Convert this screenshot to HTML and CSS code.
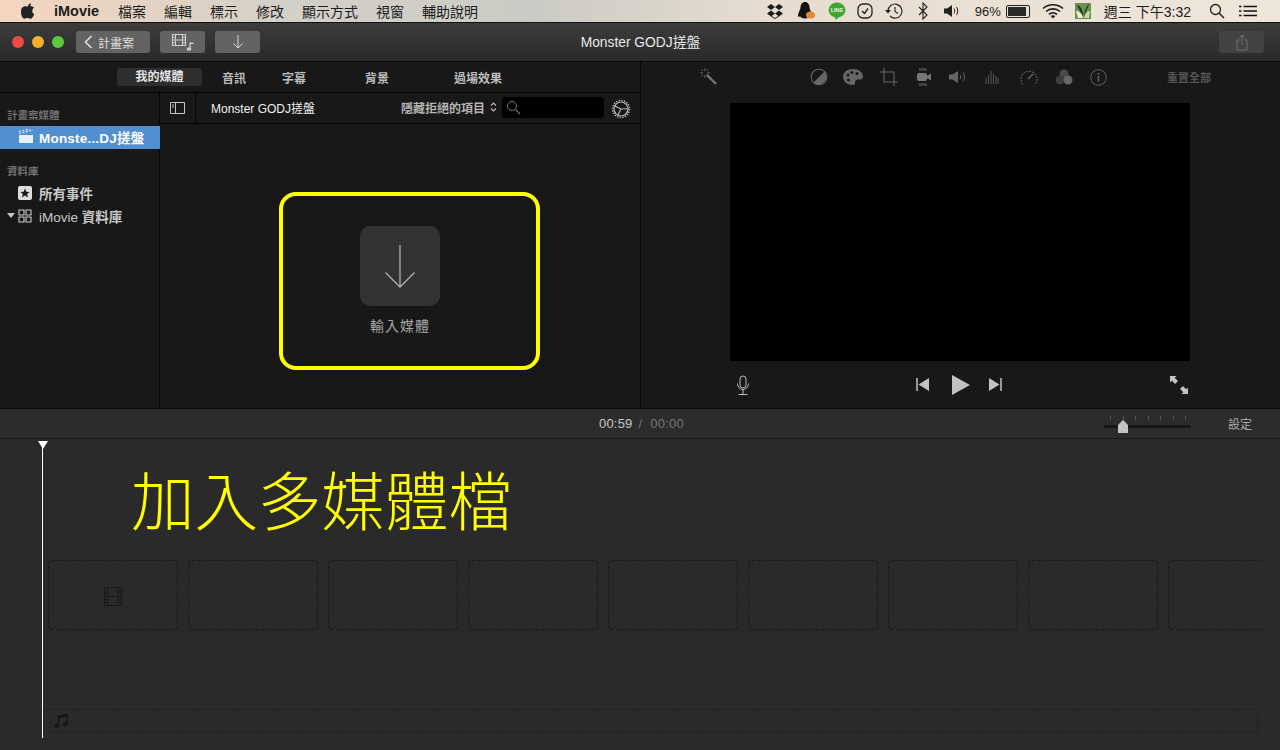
FILE: index.html
```html
<!DOCTYPE html>
<html lang="zh-Hant">
<head>
    <meta charset="UTF-8">
    <meta name="viewport" content="width=device-width, initial-scale=1.0">
    <title>iMovie</title>
    <link rel="stylesheet" href="styles.css">
</head>
<body>
    <!-- system menu bar -->
    <div class="menubar">
        <svg class="apple" width="14" height="16" viewBox="0 0 14 16"><path d="M10 0.5c.1 1.1-.3 2-.9 2.700-.6.7-1.500 1.200-2.400 1.100-.1-1 .4-2 .9-2.600C8.200 1 9.200.5 10 .5zM13.300 11.300c-.4.9-.6 1.300-1.100 2.100-.7 1.100-1.700 2.400-2.900 2.400-1.100 0-1.400-.7-2.800-.7s-1.800.7-2.900.7c-1.200 0-2.100-1.200-2.800-2.300C-.2 10.500-.4 7 .8 5.200c.8-1.300 2.100-2 3.300-2s2 .7 3 .7 1.600-.7 3-.7c1.100 0 2.200.6 3 1.600-2.600 1.500-2.200 5.200.2 6.500z"/></svg>
        <span class="menu-app">iMovie</span>
        <span class="menu-item">檔案</span>
        <span class="menu-item">編輯</span>
        <span class="menu-item">標示</span>
        <span class="menu-item">修改</span>
        <span class="menu-item">顯示方式</span>
        <span class="menu-item">視窗</span>
        <span class="menu-item">輔助說明</span>

        <div class="status">
            <svg class="st st-drop" width="18" height="18" viewBox="0 0 18 16"><path d="M5 1 9 4 5 7 1 4zM13 1l4 3-4 3-4-3zM5 7.500l4 3-4 3-4-3zM13 7.500l4 3-4 3-4-3z" fill="#1c1c1c"/><path d="M5 12.500 9 15l4-2.500v1L9 16l-4-2.500z" fill="#1c1c1c"/></svg>
            <svg class="st st-qq" width="20" height="18" viewBox="0 0 20 18"><path d="M9 0c3 0 4.500 2.500 4.500 5.500 0 2 2.500 5 2.500 8 0 2-1 1.500-2 .5-.5 1.500-2 2.500-5 2.500S4.500 15.500 4 14c-1 1-2 1.500-2 -.5 0-3 2.500-6 2.500-8C4.500 2.500 6 0 9 0z" fill="#111"/><ellipse cx="14.500" cy="13" rx="4.500" ry="3.500" fill="#e08a35"/></svg>
            <svg class="st st-line" width="18" height="18" viewBox="0 0 18 18"><ellipse cx="9" cy="8" rx="8.500" ry="7.500" fill="#3fa82c"/><path d="M7 15h4l-3 3z" fill="#3fa82c"/><text class="line-txt" x="9" y="10.300" text-anchor="middle">LINE</text></svg>
            <svg class="st st-check" width="18" height="18" viewBox="0 0 18 18"><rect x="2" y="2" width="14" height="14" rx="5" fill="none" stroke="#222" stroke-width="1.300"/><path d="M6 9l2.500 2.500L12 6.500" fill="none" stroke="#222" stroke-width="1.400"/></svg>
            <svg class="st st-time" width="20" height="18" viewBox="0 0 20 18"><path d="M4 9a7 7 0 1 1 2 5" fill="none" stroke="#222" stroke-width="1.100"/><path d="M1 8h6l-3 3.500z" fill="#222"/><path d="M11 5v4.500l3 2" fill="none" stroke="#222" stroke-width="1.100"/></svg>
            <svg class="st st-blue" width="10" height="18" viewBox="0 0 10 18"><path d="M1 5l8 8-4 4V1l4 4-8 8" fill="none" stroke="#222" stroke-width="1.100"/></svg>
            <svg class="st st-vol" width="18" height="18" viewBox="0 0 18 16"><path d="M1 5.500h3L9 2v12l-5-3.500H1z" fill="#222"/><path d="M11 5.500c1 1.500 1 3.500 0 5M13.500 4c1.700 2.500 1.700 5.500 0 8" fill="none" stroke="#222"/></svg>
            <span class="st-pct">96%</span>
            <span class="battery"><span class="battery-fill"></span></span>
            <svg class="st st-wifi" width="22" height="18" viewBox="0 0 22 16"><path d="M1 5.500c5.500-5 14.500-5 20 0M4 8.500c4-3.500 10-3.500 14 0M7 11.300c2.300-2 5.700-2 8 0" fill="none" stroke="#1c1c1c" stroke-width="1.600"/><path d="M11 15.500 8.700 13c1.300-1 3.300-1 4.600 0z" fill="#1c1c1c"/></svg>
            <svg class="st st-img" width="16" height="16" viewBox="0 0 16 16"><rect width="16" height="16" fill="#6d8f55"/><path d="M2 2c4 1 6 5 6 12C6 10 4 6 2 2zM14 1c-1 4-3 6-5 13 0-6 2-10 5-13z" fill="#1d3a17"/><path d="M1 8c3 0 6 2 7 7H3z" fill="#e8efd9"/><path d="M15 8c-3 0-5 3-6 7h5z" fill="#c5d8a8"/></svg>
            <span class="st-clock">週三 下午3:32</span>
            <svg class="st st-find" width="16" height="16" viewBox="0 0 16 16"><circle cx="6.500" cy="6.500" r="5" fill="none" stroke="#222" stroke-width="1.300"/><path d="M10 10l5 5" stroke="#222" stroke-width="1.500"/></svg>
            <svg class="st" width="18" height="12" viewBox="0 0 18 12"><path d="M0 1.500h2.500M4.500 1.500H18M0 6h2.500M4.500 6H18M0 10.500h2.500M4.500 10.500H18" stroke="#111" stroke-width="1.700"/></svg>
        </div>
    </div>

    <!-- window title bar -->
    <div class="titlebar">
        <span class="light red"></span>
        <span class="light yellow"></span>
        <span class="light green"></span>
        <button class="tb-btn tb-back">
            <svg width="9" height="14" viewBox="0 0 9 14"><path d="M7.500 1 1.500 7l6 6" fill="none" stroke="#e0e0e0" stroke-width="1.600"/></svg>
            <span>計畫案</span>
        </button>
        <button class="tb-btn tb-media">
            <svg width="24" height="18" viewBox="0 0 24 18"><path d="M1.500 1.500h13v11h-13zM4.500 1.500v11M11.500 1.500v11M4.500 7h7M1.500 4.200h3M1.500 7h3M1.500 9.800h3M11.500 4.200h3M11.500 7h3M11.500 9.800h3" fill="none" stroke="#d0d0d0"/><path d="M18.500 17V9.500h4v1.500h-2.800v5" fill="#d0d0d0"/><ellipse cx="18" cy="16" rx="2.300" ry="1.700" fill="#d0d0d0"/></svg>
        </button>
        <button class="tb-btn tb-import">
            <svg width="12" height="16" viewBox="0 0 12 16"><path d="M6 1v13M1.500 9.500 6 14l4.500-4.500" fill="none" stroke="#d8d8d8"/></svg>
        </button>
        <div class="win-title">Monster GODJ搓盤</div>
        <button class="tb-btn tb-share">
            <svg width="12" height="17" viewBox="0 0 12 17"><path d="M3.500 6H1v10h10V6H8.500M6 11V1M3.500 3.300 6 1l2.500 2.300" fill="none" stroke="#707070"/></svg>
        </button>
    </div>

    <div class="workspace">
        <!-- browser side -->
        <div class="browser">
            <div class="tabs">
                <span class="tab tab-on">我的媒體</span>
                <span class="tab tab-audio">音訊</span>
                <span class="tab tab-titles">字幕</span>
                <span class="tab tab-bg">背景</span>
                <span class="tab tab-trans">過場效果</span>
            </div>
            <div class="browser-body">
                <aside class="sidebar">
                    <div class="side-head">計畫案媒體</div>
                    <div class="side-row side-sel">
                        <svg class="side-icon" width="16" height="15" viewBox="0 0 16 15"><path d="M1 6h14v8H1z" fill="#e8f0fa"/><path d="M1 4.500 15 1M1 2.500 12 0" stroke="#e8f0fa" stroke-width="1.200" stroke-dasharray="2 1.500"/></svg>
                        <span>Monste...DJ搓盤</span>
                    </div>
                    <div class="side-head side-head2">資料庫</div>
                    <div class="side-row">
                        <svg class="side-icon" width="14" height="14" viewBox="0 0 14 14"><rect width="14" height="14" rx="2" fill="#ddd"/><path d="M7 2.500 8.300 5.700l3.400.2-2.600 2.200.9 3.400L7 9.600l-3 1.900.9-3.400-2.600-2.200 3.400-.2z" fill="#1a1a1a"/></svg>
                        <span>所有事件</span>
                    </div>
                    <div class="side-row side-lib">
                        <span class="disclose"></span>
                        <svg class="side-icon" width="14" height="14" viewBox="0 0 14 14"><path d="M1 1h5v5H1zM8 1h5v5H8zM1 8h5v5H1zM8 8h5v5H8z" fill="none" stroke="#ccc" stroke-width="1.100"/></svg>
                        <span>iMovie <b>資料庫</b></span>
                    </div>
                </aside>
                <div class="media">
                    <div class="media-bar">
                        <div class="media-toggle">
                            <svg width="15" height="12" viewBox="0 0 15 12"><path d="M.5.500h14v11H.5zM5.500.500v11M2 3h2M2 5h2" fill="none" stroke="#c4c4c4"/></svg>
                        </div>
                        <span class="media-name">Monster GODJ搓盤</span>
                        <span class="media-filter">隱藏拒絕的項目</span>
                        <svg class="media-arrows" width="7" height="12" viewBox="0 0 7 12"><path d="M1 4.500 3.500 2 6 4.500M1 7.500 3.500 10 6 7.500" fill="none" stroke="#bbb" stroke-width="1.100"/></svg>
                        <div class="search">
                            <svg width="15" height="15" viewBox="0 0 15 15"><circle cx="6" cy="6" r="4.500" fill="none" stroke="#777"/><path d="M9.500 9.500l4.500 4.500" stroke="#777" stroke-width="1.100"/></svg>
                        </div>
                        <svg class="gear" width="20" height="20" viewBox="0 0 20 20"><circle cx="10" cy="10" r="7" fill="none" stroke="#bdbdbd" stroke-width="1.200"/><circle cx="10" cy="10" r="8.500" fill="none" stroke="#bdbdbd" stroke-width="1.500" stroke-dasharray="1.300 1.370"/><path d="M10 10 3.800 7M10 10l6.800-.2M10 10l-3 6" stroke="#bdbdbd" stroke-width="1.100"/></svg>
                    </div>
                    <div class="media-main">
                        <div class="mark-box">
                            <div class="import">
                                <div class="import-tile">
                                    <svg width="32" height="44" viewBox="0 0 32 44"><path d="M16 1v42M1.500 28.500 16 43l14.500-14.500" fill="none" stroke="#b0b0b0" stroke-width="1.300"/></svg>
                                </div>
                                <div class="import-label">輸入媒體</div>
                            </div>
                        </div>
                    </div>
                </div>
            </div>
        </div>

        <!-- viewer side -->
        <div class="viewer">
            <div class="adjust">
                <svg class="wand" width="20" height="20" viewBox="0 0 20 20"><path d="M8 8l9 9" stroke="#777" stroke-width="2.400"/><path d="M6 1v3M6 8v3M1 6h3M8 6h3M2.500 2.500l1.500 1.500M9.500 2.500 8 4M2.500 9.500 4 8" stroke="#666"/></svg>
                <svg class="adj a1" width="18" height="18" viewBox="0 0 18 18"><circle cx="9" cy="9" r="7.800" fill="none" stroke="#666" stroke-width="1.100"/><path d="M14.500 3.500A7.800 7.800 0 0 1 3.500 14.500z" fill="#666"/></svg>
                <svg class="adj a2" width="21" height="18" viewBox="0 0 21 18"><path d="M10 1C4 1 0 4.500 0 9c0 5 5 8 10 8 2.500 0 2-2 2-3 0-2 2-2.500 4-2.500s4-.5 4-3C20 4 15.500 1 10 1z" fill="#666"/><circle cx="5" cy="7" r="1.500" fill="#1a1a1a"/><circle cx="9" cy="4.500" r="1.500" fill="#1a1a1a"/><circle cx="14" cy="5.500" r="1.500" fill="#1a1a1a"/><circle cx="5.500" cy="12" r="1.500" fill="#1a1a1a"/></svg>
                <svg class="adj a3" width="18" height="18" viewBox="0 0 18 18"><path d="M4 0v14h14M0 4h14v14" fill="none" stroke="#666" stroke-width="1.100"/></svg>
                <svg class="adj a4" width="16" height="18" viewBox="0 0 16 18"><path d="M3 0h8M3 18h8M3 2h8M3 16h8" stroke="#666"/><rect x="1" y="5" width="10" height="8" rx="2" fill="#777"/><path d="M11 8l4-2.500v7L11 10z" fill="#777"/></svg>
                <svg class="adj a5" width="18" height="14" viewBox="0 0 18 14"><path d="M0 4.500h3.500L9 1v12L3.500 9.500H0z" fill="#666"/><path d="M11 4.500c1 1.500 1 3.500 0 5M14 2.500c2 3 2 6 0 9" fill="none" stroke="#666"/></svg>
                <svg class="adj a6" width="14" height="14" viewBox="0 0 14 14"><path d="M1 8v6M3.500 5v9M6 1v13M8.500 4v10M11 6v8M13 8v6" stroke="#555"/></svg>
                <svg class="adj a7" width="18" height="18" viewBox="0 0 18 18"><path d="M3 16.500a8 8 0 1 1 12 0" fill="none" stroke="#666" stroke-dasharray="2 1"/><path d="M8 11l5-5" stroke="#666" stroke-width="1.400"/></svg>
                <svg class="adj a8" width="18" height="16" viewBox="0 0 18 16"><circle cx="9" cy="5" r="4.500" fill="#4a4a4a"/><circle cx="5" cy="11" r="4.500" fill="#3d3d3d"/><circle cx="13" cy="11" r="4.500" fill="#666"/></svg>
                <svg class="adj a9" width="17" height="17" viewBox="0 0 17 17"><circle cx="8.500" cy="8.500" r="7.800" fill="none" stroke="#666"/><rect x="7.700" y="7" width="1.600" height="5.500" fill="#666"/><rect x="7.700" y="4" width="1.600" height="1.700" fill="#666"/></svg>
                <span class="reset">重置全部</span>
            </div>
            <div class="stage"></div>
            <div class="transport">
                <svg class="mic" width="14" height="20" viewBox="0 0 14 20"><rect x="4" y="1" width="6" height="12" rx="3" fill="none" stroke="#bbb"/><path d="M1.500 8.500c0 3.500 2.500 6 5.500 6s5.500-2.500 5.500-6M7 14.500v4.500M2.500 19.500h9" fill="none" stroke="#bbb"/></svg>
                <svg class="prev" width="14" height="13" viewBox="0 0 14 13"><path d="M1 0v13" stroke="#c2c2c2" stroke-width="1.500"/><path d="M2.500 6.500 13 0v13z" fill="#c2c2c2"/></svg>
                <svg class="play" width="19" height="20" viewBox="0 0 19 20"><path d="M1 0l18 10L1 20z" fill="#c2c2c2"/></svg>
                <svg class="next" width="14" height="13" viewBox="0 0 14 13"><path d="M13 0v13" stroke="#c2c2c2" stroke-width="1.500"/><path d="M11.500 6.500 1 0v13z" fill="#c2c2c2"/></svg>
                <svg class="full" width="18" height="18" viewBox="0 0 18 18"><path d="M0 0h6.500L4.700 1.800 8 5.100 5.100 8 1.800 4.700 0 6.500zM18 18h-6.500l1.800-1.800L10 12.900 12.900 10l3.300 3.300L18 11.500z" fill="#c2c2c2"/></svg>
            </div>
        </div>
    </div>

    <!-- timeline -->
    <div class="tl-head">
        <div class="tl-time"><span class="now">00:59</span><span class="sep">/</span><span class="total">00:00</span></div>
        <div class="zoom">
            <div class="ticks"><i></i><i></i><i></i><i></i><i></i><i></i><i></i></div>
            <div class="zoom-track"></div>
            <svg class="zoom-knob" width="10" height="13" viewBox="0 0 10 13"><path d="M5 0l5 5v8H0V5z" fill="#c4c4c4"/></svg>
        </div>
        <span class="tl-settings">設定</span>
    </div>
    <div class="timeline">
        <div class="playhead"></div>
        <div class="tl-note">加入多媒體檔</div>
        <div class="clips">
            <div class="clip">
                <svg width="18" height="19" viewBox="0 0 18 19"><path d="M.5.500h17v18H.5zM4 .500v18M14 .500v18M4 9.500h10M.5 3.500H4M.5 6.500H4M.5 9.500H4M.5 12.500H4M.5 15.500H4M14 3.500h3.500M14 6.500h3.500M14 9.500h3.500M14 12.500h3.500M14 15.500h3.500" fill="none" stroke="#191919"/></svg>
            </div>
            <div class="clip"></div>
            <div class="clip"></div>
            <div class="clip"></div>
            <div class="clip"></div>
            <div class="clip"></div>
            <div class="clip"></div>
            <div class="clip"></div>
            <div class="clip"></div>
        </div>
        <div class="audio-lane">
            <svg width="14" height="14" viewBox="0 0 14 14"><path d="M4.500 11.500V2.500l8.500-2v9.500" fill="none" stroke="#161616" stroke-width="1.300"/><path d="M4.500 2.500l8.500-2v2l-8.500 2z" fill="#161616"/><ellipse cx="2.800" cy="11.800" rx="2.500" ry="1.900" fill="#161616"/><ellipse cx="11.200" cy="10.300" rx="2.500" ry="1.900" fill="#161616"/></svg>
        </div>
    </div>
</body>
</html>
```

FILE: styles.css
```css
html, body {
    margin: 0;
    height: 750px;
    overflow: hidden;
}

body {
    font-family: "Liberation Sans", "Noto Sans CJK TC", sans-serif;
    background-color: #2a2a2a;
    color: #ccc;
    font-size: 12px;
}

button { font-family: inherit; border: none; padding: 0; }
svg { display: block; flex: none; }

/* menu bar */
.menubar {
    height: 22px;
    border-bottom: 1px solid #111;
    background: linear-gradient(90deg, #f4d6bf 0, #d3d0c8 22%, #cbcbc5 42%, #e6ddd0 60%, #efe6da 100%);
    display: flex;
    align-items: center;
    padding-left: 21px;
    color: #1c1c1c;
    font-size: 14px;
}

.apple { margin-right: 19px; fill: #222; }
.menu-app { font-weight: bold; font-size: 14.500px; margin-right: 18px; width: 46px; }
.menu-item { margin-right: 18px; }

.status {
    margin-left: auto;
    display: flex;
    align-items: center;
    height: 22px;
    padding-right: 23px;
}

.st-drop { margin-right: 12px; }
.st-qq { margin-right: 12px; }
.st-line { margin-right: 10px; }
.st-check { margin-right: 10px; }
.st-time { margin-right: 14px; }
.st-blue { margin-right: 15px; }
.st-vol { margin-right: 14px; }
.st-wifi { margin-right: 11px; }
.st-img { margin-right: 13px; }
.st-find { margin-right: 14px; }

.line-txt { font: bold 5.500px "Liberation Sans", sans-serif; fill: #f1f1e5; }

.st-pct { font-size: 13px; margin-right: 5px; white-space: nowrap; }

.battery {
    width: 20px;
    height: 9px;
    border: 1px solid #222;
    border-radius: 2px;
    padding: 1px;
    margin-right: 12px;
}

.battery-fill { display: block; height: 100%; width: 92%; background-color: #2b2b2b; }

.st-clock { font-size: 14px; margin-right: 18px; white-space: nowrap; }

/* title bar */
.titlebar {
    height: 38px;
    border-bottom: 1px solid #0a0a0a;
    background: linear-gradient(#3d3d3d, #292929);
    display: flex;
    align-items: center;
    padding-left: 12px;
    position: relative;
}

.light { width: 12px; height: 12px; border-radius: 50%; margin-right: 8px; }
.red { background-color: #ed4a46; }
.yellow { background-color: #f5b128; }
.green { background-color: #5ec83c; }

.tb-btn {
    height: 22px;
    border-radius: 3px;
    background-color: #636363;
    color: #dedede;
    display: flex;
    align-items: center;
    justify-content: center;
    font-size: 12px;
}

.tb-back { width: 74px; margin-left: 4px; gap: 5px; justify-content: flex-start; padding-left: 8px; }
.tb-media { width: 45px; margin-left: 10px; }
.tb-import { width: 45px; margin-left: 10px; }
.tb-share { width: 45px; margin-left: auto; margin-right: 16px; background-color: #434343; }

.win-title {
    position: absolute;
    left: 1px;
    right: 0;
    top: 8px;
    text-align: center;
    color: #e8e8e8;
    font-size: 13.800px;
    pointer-events: none;
}

/* main row */
.workspace {
    height: 346px;
    border-bottom: 1px solid #080808;
    display: flex;
    background-color: #181818;
}

.browser {
    width: 640px;
    border-right: 1px solid #050505;
    display: flex;
    flex-direction: column;
}

.tabs {
    height: 30px;
    border-bottom: 1px solid #050505;
    display: flex;
    align-items: center;
    padding-left: 117px;
    color: #bcbcbc;
    font-size: 12px;
    font-weight: bold;
}

.tab-on {
    width: 85px;
    height: 18px;
    line-height: 18px;
    text-align: center;
    border-radius: 3px;
    background-color: #2e2e2e;
    color: #e4e4e4;
}

.tab-audio { margin-left: 20px; }
.tab-titles { margin-left: 36px; }
.tab-bg { margin-left: 59px; }
.tab-trans { margin-left: 65px; }

.browser-body { flex: 1; display: flex; }

.sidebar {
    width: 159px;
    border-right: 1px solid #050505;
    padding-top: 13px;
    flex: none;
}

.side-head {
    padding-left: 7px;
    height: 20px;
    line-height: 19px;
    font-size: 10.500px;
    font-weight: bold;
    color: #707070;
}

.side-head2 { margin-top: 13px; height: 20px; }

.side-row {
    height: 23px;
    box-sizing: border-box;
    padding: 0 0 2px 18px;
    display: flex;
    align-items: center;
    font-size: 13.500px;
    font-weight: bold;
    color: #c8c8c8;
    white-space: nowrap;
}

.side-icon { margin-right: 7px; }
.side-sel { background-color: #518fd0; color: #fff; letter-spacing: .2px; margin-right: -1px; }
.side-sel .side-icon { margin-right: 5px; }
.side-lib { padding-left: 7px; font-weight: normal; }

.disclose {
    width: 0;
    height: 0;
    border-left: 4px solid transparent;
    border-right: 4px solid transparent;
    border-top: 5px solid #c8c8c8;
    margin-right: 3px;
}

.media { flex: 1; display: flex; flex-direction: column; }

.media-bar {
    height: 30px;
    border-bottom: 1px solid #050505;
    display: flex;
    align-items: center;
}

.media-toggle {
    width: 35px;
    height: 30px;
    border-right: 1px solid #050505;
    display: flex;
    align-items: center;
    justify-content: center;
}

.media-name { margin: -2px 0 0 15px; color: #f0f0f0; font-size: 12px; width: 190px; white-space: nowrap; }
.media-filter { margin-top: -2px; color: #b4b4b4; font-weight: bold; width: 89px; font-size: 12px; white-space: nowrap; }
.media-arrows { margin-right: 4px; margin-top: -2px; }

.search {
    width: 102px;
    height: 21px;
    margin: -2px 0 0 1px;
    background-color: #000;
    border-radius: 3px;
    display: flex;
    align-items: center;
    padding-left: 4px;
    box-sizing: border-box;
}

.gear { margin: 1px 0 0 7px; }

.media-main {
    flex: 1;
    display: flex;
    align-items: flex-start;
    padding: 68px 0 0 119px;
}

.mark-box {
    width: 261px;
    height: 178px;
    box-sizing: border-box;
    border: 4px solid #ff0;
    border-radius: 17px;
    padding: 30px 0 0 77px;
}

.import { width: 80px; display: flex; flex-direction: column; align-items: center; }

.import-tile {
    width: 80px;
    height: 80px;
    border-radius: 10px;
    background-color: #333;
    display: flex;
    align-items: center;
    justify-content: center;
}

.import-label { margin-top: 9px; font-size: 14px; letter-spacing: 1px; color: #a8a8a8; }

/* viewer */
.viewer { flex: 1; display: flex; flex-direction: column; }

.adjust { height: 30px; display: flex; align-items: center; padding-left: 58px; }

.a1 { margin-left: 91px; }
.a2 { margin-left: 15px; }
.a3 { margin-left: 16px; }
.a4 { margin-left: 18px; }
.a5 { margin-left: 17px; }
.a6 { margin-left: 18px; }
.a7 { margin-left: 21px; }
.a8 { margin-left: 17px; }
.a9 { margin-left: 17px; }

.reset { margin-left: 60px; color: #555; font-size: 11px; font-weight: bold; }

.stage {
    width: 460px;
    height: 258px;
    margin: 11px 0 0 89px;
    background-color: #000;
}

.transport { flex: 1; display: flex; align-items: center; padding-left: 95px; }

.prev { margin-left: 166px; }
.play { margin-left: 21px; }
.next { margin-left: 18px; }
.full { margin-left: 168px; }

/* timeline */
.tl-head {
    height: 29px;
    border-bottom: 1px solid #1c1c1c;
    background-color: #2c2c2c;
    display: flex;
    align-items: center;
    padding-left: 599px;
    font-size: 13px;
}

.tl-time { width: 505px; display: flex; letter-spacing: .2px; }
.now { color: #c8c8c8; }
.sep { color: #777; margin: 0 8px 0 6px; }
.total { color: #777; }

.zoom { width: 87px; height: 20px; position: relative; }

.ticks {
    display: flex;
    justify-content: space-between;
    padding: 2px 5px 0 6px;
}

.ticks i { width: 1px; height: 4px; background-color: #555; }

.zoom-track {
    position: absolute;
    left: 0;
    right: 0;
    top: 11px;
    height: 3px;
    border-radius: 2px;
    background-color: #161616;
}

.zoom-knob { position: absolute; left: 14px; top: 6px; }

.tl-settings { margin-left: 37px; color: #aaa; font-size: 12px; }

.timeline {
    position: relative;
    height: 311px;
    background-color: #2a2a2a;
    padding-left: 48px;
}

.playhead {
    position: absolute;
    left: 42px;
    top: 2px;
    bottom: 12px;
    width: 1px;
    background-color: #fff;
}

.playhead::before {
    content: "";
    position: absolute;
    left: -5px;
    top: 0;
    border-left: 5px solid transparent;
    border-right: 5px solid transparent;
    border-top: 8px solid #fff;
    margin-left: .5px;
}

.tl-note {
    padding: 19px 0 0 83px;
    height: 105px;
    box-sizing: border-box;
    font-size: 63.500px;
    font-weight: 300;
    line-height: 90px;
    color: #ff0;
    white-space: nowrap;
}

.clips {
    margin-top: 16px;
    width: 1214px;
    display: flex;
    gap: 10px;
    overflow: hidden;
}

.clip {
    width: 130px;
    height: 70px;
    flex: none;
    box-sizing: border-box;
    border: 1px dashed #1a1a1a;
    border-radius: 4px;
    display: flex;
    align-items: center;
    justify-content: center;
    padding-top: 3px;
}

.audio-lane {
    margin: 79px 0 0 -5px;
    width: 1215px;
    height: 24px;
    box-sizing: border-box;
    border: 1px dashed #1f1f1f;
    border-radius: 4px;
    display: flex;
    align-items: center;
    padding-left: 10px;
}
```
